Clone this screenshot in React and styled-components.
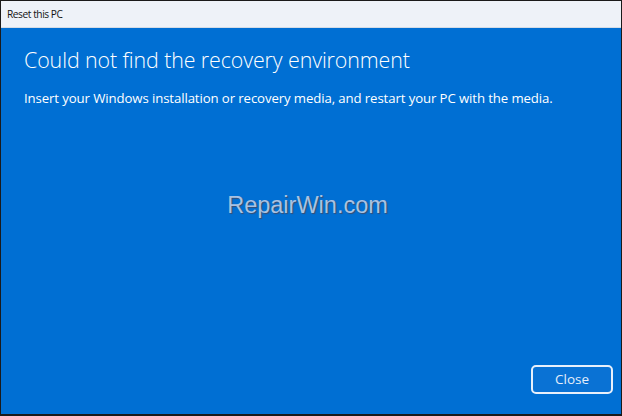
import React from "react";
import styled, { createGlobalStyle } from "styled-components";

const GlobalStyle = createGlobalStyle`
  html, body {
    margin: 0;
    padding: 0;
    background: #ffffff;
  }
  * {
    box-sizing: border-box;
  }
`;

export default function App() {
  return (
    <>
      <GlobalStyle />
      <Window>
        <TitleBar>Reset this PC</TitleBar>
        <Content>
          <Heading>Could not find the recovery environment</Heading>
          <Message>
            Insert your Windows installation or recovery media, and restart your PC with the media.
          </Message>
          <Watermark>RepairWin.com</Watermark>
          <Footer>
            <CloseButton>Close</CloseButton>
          </Footer>
        </Content>
      </Window>
    </>
  );
}

const Window = styled.div`
  width: 622px;
  height: 416px;
  display: flex;
  flex-direction: column;
  border: 1px solid #1a1a1a;
  border-bottom-width: 2px;
  font-family: "Open Sans", "Noto Sans", sans-serif;
  overflow: hidden;
`;

const TitleBar = styled.div`
  height: 27px;
  flex-shrink: 0;
  display: flex;
  align-items: center;
  padding: 0 0 1px 6px;
  background: #eef2f8;
  border-bottom: 1px solid #d4dce6;
  font-size: 10.2px;
  color: #141414;
  letter-spacing: -0.45px;
`;

const Content = styled.div`
  flex: 1;
  display: flex;
  flex-direction: column;
  padding: 17px 8px 20px 23px;
  background: #006fd3;
  color: #ffffff;
`;

const Heading = styled.h1`
  margin: 0;
  font-size: 21.4px;
  font-weight: 300;
  line-height: 30px;
  letter-spacing: -0.1px;
`;

const Message = styled.p`
  margin: 14px 0 0;
  font-size: 13.2px;
  line-height: 18px;
  letter-spacing: -0.1px;
`;

const Watermark = styled.div`
  margin-top: 85px;
  align-self: center;
  padding-right: 22px;
  font-family: "Liberation Sans", Arial, sans-serif;
  font-size: 23.5px;
  color: #a9c2e2;
  text-shadow: 1px 1px 1px #3a4d70;
`;

const Footer = styled.div`
  margin-top: auto;
  display: flex;
  justify-content: flex-end;
`;

const CloseButton = styled.button`
  width: 82px;
  height: 29px;
  border: 2px solid #e8f0fb;
  border-radius: 5px;
  background: #0a72d4;
  color: #e6eefa;
  font-family: "Open Sans", "Noto Sans", sans-serif;
  font-size: 13.5px;
  padding: 0 0 2px;
`;
